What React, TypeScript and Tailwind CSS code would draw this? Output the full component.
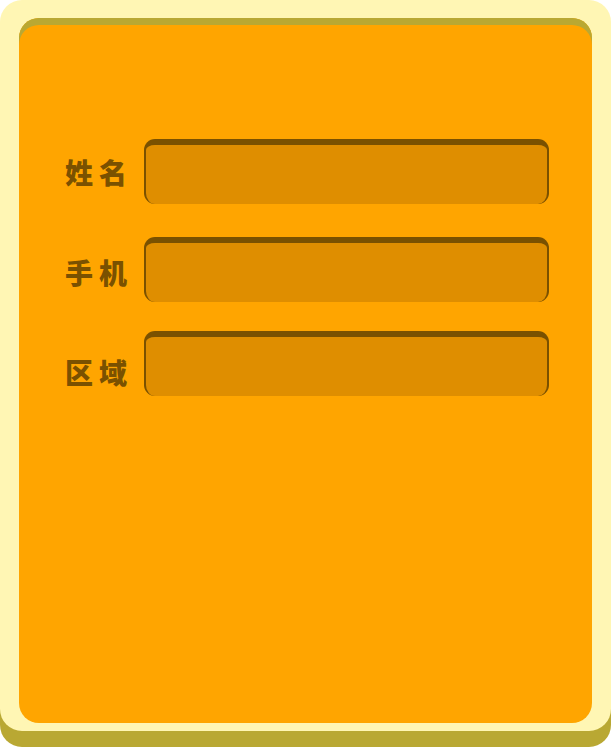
const fields = [
  { label: "姓名", row: "", text: "mt-[19px]" },
  { label: "手机", row: "mt-[33px]", text: "mt-[21px]" },
  { label: "区域", row: "mt-[29px]", text: "mt-[27px]" },
];

function Field({ label, row, text }: { label: string; row: string; text: string }) {
  return (
    <div className={`flex items-start ${row}`}>
      <label className={`w-[79px] text-[28px] font-black leading-none tracking-[6px] text-[#7a5100] ${text}`}>
        {label}
      </label>
      <div className="h-[65px] w-[405px] rounded-[11px] border-x-2 border-t-[6px] border-b-0 border-[#7a5100] bg-[#df8e00]" />
    </div>
  );
}

export default function App() {
  return (
    <div
      className="h-[749px] w-[611px] bg-white"
      style={{ fontFamily: '"Noto Sans CJK SC", "Noto Sans", sans-serif' }}
    >
      <div className="h-[731px] rounded-[22px] bg-[#fff6b4] px-[19px] pt-[18px] shadow-[0_16px_0_#b9a833]">
        <div className="h-[705px] rounded-[20px] bg-[#ffa500] pl-[46px] pt-[121px] shadow-[inset_0_7px_0_#b9a833]">
          <div className="flex flex-col">
            {fields.map((f) => (
              <Field key={f.label} {...f} />
            ))}
          </div>
        </div>
      </div>
    </div>
  );
}
